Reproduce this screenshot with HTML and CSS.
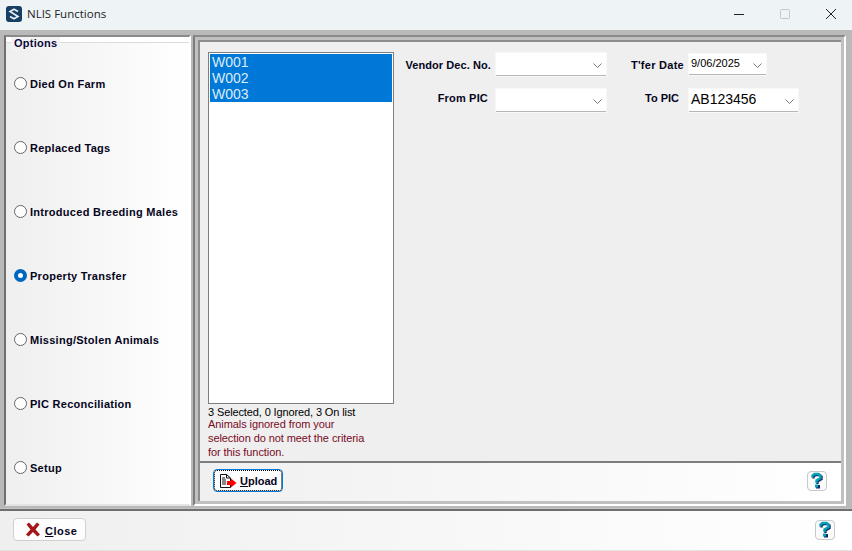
FILE: index.html
```html
<!DOCTYPE html>
<html lang="en">
<head>
<meta charset="utf-8">
<title>NLIS Functions</title>
<link rel="stylesheet" href="styles.css">
</head>
<body>
<div class="window">
  <header class="titlebar">
    <svg class="app-icon" width="16" height="16" viewBox="0 0 16 16"><rect width="16" height="16" rx="3" fill="#173f63"/><path d="M12 5.500 8 3.200 4 5.500 12 10.500 8 12.800 4 10.500" fill="none" stroke="#e8f0f5" stroke-width="1.600"/></svg>
    <span class="title">NLIS Functions</span>
    <div class="controls">
      <span class="ctl"><svg width="12" height="12" viewBox="0 0 12 12"><path d="M1 6.500H11" stroke="#222" stroke-width="1"/></svg></span>
      <span class="ctl"><svg width="12" height="12" viewBox="0 0 12 12"><rect x="1.500" y="1.500" width="9" height="9" rx="1" fill="none" stroke="#c4c8ca"/></svg></span>
      <span class="ctl"><svg width="12" height="12" viewBox="0 0 12 12"><path d="M1 1 11 11M11 1 1 11" stroke="#222" stroke-width="1"/></svg></span>
    </div>
  </header>
  <main class="main">
    <aside class="options">
      <div class="legend">Options</div>
      <div class="radios">
        <label class="radio"><span class="dot"></span>Died On Farm</label>
        <label class="radio"><span class="dot"></span>Replaced Tags</label>
        <label class="radio"><span class="dot"></span>Introduced Breeding Males</label>
        <label class="radio"><span class="dot on"></span>Property Transfer</label>
        <label class="radio"><span class="dot"></span>Missing/Stolen Animals</label>
        <label class="radio"><span class="dot"></span>PIC Reconciliation</label>
        <label class="radio"><span class="dot"></span>Setup</label>
      </div>
    </aside>
    <section class="content">
      <div class="inner">
        <div class="work">
          <div class="list-col">
            <div class="list">
              <div class="item">W001</div>
              <div class="item">W002</div>
              <div class="item">W003</div>
            </div>
            <div class="status">3 Selected, 0 Ignored, 3 On list</div>
            <div class="warning">Animals ignored from your<br>selection do not meet the criteria<br>for this function.</div>
          </div>
          <div class="fields">
            <div class="field-col first">
              <div class="field"><span class="lbl lbl-vendor">Vendor Dec. No.</span><span class="combo combo-a"><svg class="chev" width="9" height="5" viewBox="0 0 9 5"><path d="M.5 .5 4.500 4.500 8.500 .5" fill="none" stroke="#777"/></svg></span></div>
              <div class="field"><span class="lbl lbl-from">From PIC</span><span class="combo combo-a"><svg class="chev" width="9" height="5" viewBox="0 0 9 5"><path d="M.5 .5 4.500 4.500 8.500 .5" fill="none" stroke="#777"/></svg></span></div>
            </div>
            <div class="field-col second">
              <div class="field"><span class="lbl lbl-date">T'fer Date</span><span class="combo combo-date"><span class="date">9/06/2025</span><svg class="chev chev-date" width="9" height="5" viewBox="0 0 9 5"><path d="M.5 .5 4.500 4.500 8.500 .5" fill="none" stroke="#777"/></svg></span></div>
              <div class="field"><span class="lbl lbl-to">To PIC</span><span class="combo combo-pic"><span class="pic">AB123456</span><svg class="chev" width="9" height="5" viewBox="0 0 9 5"><path d="M.5 .5 4.500 4.500 8.500 .5" fill="none" stroke="#777"/></svg></span></div>
            </div>
          </div>
        </div>
        <div class="actionbar">
          <button class="btn upload" type="button">
            <svg width="17" height="17" viewBox="0 0 17 17"><path d="M.5 2.500H6.500L10.500 6V15.500H.5Z" fill="#fff" stroke="#111"/><path d="M6.500 2.500V6H10.500M2 6H5M2 8H6M2 10H6M2 12H6" fill="none" stroke="#111"/><path d="M7 9H11V6.500L16.500 11 11 15.500V13H7Z" fill="#f00"/></svg>
            <span><u>U</u>pload</span>
          </button>
          <span class="help"><svg width="14" height="17" viewBox="0 0 14 17"><g fill="none" stroke="#0b2a6e" stroke-width="2.400" transform="translate(1 1)"><path d="M2.500 5.500V3.500L4.500 2H8.500L10.500 3.500V6L6.500 8.500V11"/></g><rect x="6" y="13" width="4" height="3.500" fill="#0b2a6e"/><g fill="none" stroke="#06a3b4" stroke-width="2.400"><path d="M2.500 5.500V3.500L4.500 2H8.500L10.500 3.500V6L6.500 8.500V11"/></g><rect x="5" y="12.500" width="3" height="3" fill="#06a3b4"/></svg></span>
        </div>
      </div>
    </section>
  </main>
  <footer class="footer">
    <button class="btn close" type="button">
      <svg width="14" height="15" viewBox="0 0 14 15"><path d="M.5 2.500 3 .5 7 5 11 .5 13.500 2.500 9.500 7.500 14 12.500 11.500 14.500 7 10 2.500 14.500 0 12.500 4.500 7.500Z" fill="#a3161a"/></svg>
      <span class="close-text"><u>C</u>lose</span>
    </button>
    <span class="help"><svg width="14" height="17" viewBox="0 0 14 17"><g fill="none" stroke="#0b2a6e" stroke-width="2.400" transform="translate(1 1)"><path d="M2.500 5.500V3.500L4.500 2H8.500L10.500 3.500V6L6.500 8.500V11"/></g><rect x="6" y="13" width="4" height="3.500" fill="#0b2a6e"/><g fill="none" stroke="#06a3b4" stroke-width="2.400"><path d="M2.500 5.500V3.500L4.500 2H8.500L10.500 3.500V6L6.500 8.500V11"/></g><rect x="5" y="12.500" width="3" height="3" fill="#06a3b4"/></svg></span>
  </footer>
</div>
</body>
</html>
```
FILE: styles.css
```css
* { box-sizing: border-box; }
html, body { margin: 0; padding: 0; }
body { width: 852px; height: 551px; overflow: hidden; font-family: "Liberation Sans", Arial, sans-serif; font-size: 11px; color: #000; }
.window { width: 852px; height: 551px; display: flex; flex-direction: column; background: #b9b9b9; }
.titlebar { height: 30px; flex: none; display: flex; align-items: center; padding: 0 0 3px 6px; background: #eef3f6; }
.app-icon { flex: none; }
.title { margin-left: 5px; font-family: "Open Sans", sans-serif; font-size: 11.5px; color: #222; }
.controls { margin-left: auto; margin-right: -2px; display: flex; }
.ctl { width: 46px; height: 27px; display: flex; align-items: center; justify-content: center; }

.main { height: 479px; flex: none; display: flex; padding: 5px 5px 2px 4px; gap: 2px; border-bottom: 1px solid #c4c4c4; }
.options { width: 187px; position: relative; border: 2px solid #fff; border-left-color: #6f6f6f; border-top-color: #8a8a8a; border-bottom-color: #e4e4e4; background: #fff; padding-top: 5px; }
.legend { position: absolute; left: 5px; top: 0; padding: 0 3px; font-weight: 700; letter-spacing: .25px; color: #0a0a3c; background: #f3f3f3; line-height: 13px; }
.radios { height: 100%; display: flex; flex-direction: column; gap: 50px; padding: 34px 0 0 8px; border-top: 1px solid #dcdcdc; background: linear-gradient(90deg, #efefef, #fff); }
.radio { display: flex; align-items: center; height: 14px; font-weight: 700; letter-spacing: .28px; color: #050520; gap: 3px; white-space: nowrap; }
.dot { width: 13px; height: 13px; border-radius: 50%; border: 1px solid #666; background: #fff; flex: none; align-self: flex-start; }
.dot.on { border: 4px solid #0067c0; }

.content { width: 653px; border: 2px solid #7d7d7d; border-right-color: #fff; border-bottom-color: #fff; border-top-color: #8a8a8a; padding: 3px; background: #c0c0c0; }
.inner { height: 100%; display: flex; flex-direction: column; border-top: 2px solid #8d8d8d; border-left: 2px solid #8d8d8d; }
.work { flex: 1; min-height: 0; display: flex; background: #efefef; padding: 10px 0 0 8px; }
.list-col { width: 186px; flex: none; }
.list { height: 352px; background: #fff; border: 1px solid #7e7e7e; padding: 1px; }
.item { height: 16px; line-height: 16px; padding-left: 2px; font-size: 14px; color: #dcebf8; background: #0078d7; }
.status { margin-top: 3px; line-height: 10px; font-size: 11px; letter-spacing: -.12px; color: #000; }
.warning { line-height: 14px; font-size: 11px; letter-spacing: -.08px; color: #7a0a1e; }
.fields { display: flex; }
.field-col { display: flex; flex-direction: column; width: 212px; }
.first { gap: 13px; padding-top: 1px; }
.second { gap: 14px; padding-top: 2px; }
.field { display: flex; align-items: center; }
.lbl { font-weight: 700; letter-spacing: .28px; text-align: right; color: #050520; white-space: nowrap; }
.lbl-vendor { width: 97px; margin-right: 5px; letter-spacing: .08px; padding-top: 1px; }
.lbl-from { width: 94px; margin-right: 8px; letter-spacing: .18px; padding-bottom: 5px; }
.lbl-date { width: 78px; margin-right: 5px; }
.lbl-to { width: 73px; margin-right: 10px; letter-spacing: 0; padding-bottom: 5px; }
.combo { position: relative; display: block; height: 23px; background: #fff; border-bottom: 1px solid #b5b5b5; box-shadow: 0 0 0 1px #f8f8f8; }
.combo-a { width: 110px; }
.combo-date { width: 77px; height: 21px; }
.combo-pic { width: 109px; }
.chev { position: absolute; right: 4px; top: 10px; }
.chev-date { top: 9px; }
.date { position: absolute; left: 2px; top: 3px; font-size: 11px; }
.pic { position: absolute; left: 2px; top: 2px; font-size: 14px; }

.actionbar { height: 40px; flex: none; display: flex; align-items: center; justify-content: space-between; border-top: 2px solid #7d7d7d; background: linear-gradient(90deg, #f0f0f0, #fff); padding: 0 14px 3px 13px; }
.btn { display: inline-flex; align-items: center; font-family: inherit; font-size: 11px; font-weight: 700; color: #050520; background: #fdfdfd; padding: 0; }
.upload { width: 70px; height: 23px; gap: 3px; padding-left: 6px; border: 1px solid #0078d7; border-radius: 4px; outline: 1px dotted #000; outline-offset: -2px; }
.close { width: 73px; height: 23px; gap: 5px; padding-left: 12px; border: 1px solid #d0d0d0; border-radius: 4px; }
.close-text { padding-top: 2px; letter-spacing: .5px; }
.help { width: 20px; height: 20px; display: flex; align-items: center; justify-content: center; background: #fbfbfb; border: 1px solid #c8c8c8; border-radius: 4px; }

.footer { flex: 1; display: flex; align-items: center; justify-content: space-between; border-top: 2px solid #6f6f6f; border-bottom: 1px solid #e2e2e2; background: linear-gradient(90deg, #efefef, #fff); padding: 0 17px 2px 13px; }
```
